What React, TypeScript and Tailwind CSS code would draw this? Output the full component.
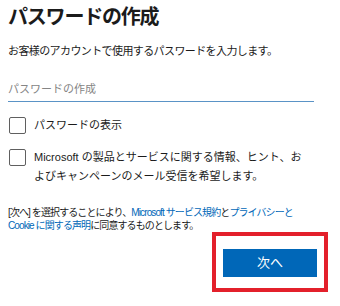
import { useState } from "react";

const jp = { fontFamily: '"Liberation Sans", "Noto Sans CJK JP", sans-serif' };

function Check({ checked, onToggle }: { checked: boolean; onToggle: () => void }) {
  return (
    <button
      type="button"
      onClick={onToggle}
      className="w-[17px] h-[17px] shrink-0 rounded-[2px] border border-[#5f5f5f] bg-white flex items-center justify-center"
    >
      {checked && (
        <svg width="11" height="11" viewBox="0 0 12 12" fill="none">
          <path d="M2 6.5l2.5 2.5L10 3" stroke="#1b1b1b" strokeWidth="1.4" />
        </svg>
      )}
    </button>
  );
}

export default function App() {
  const [show, setShow] = useState(false);
  const [mail, setMail] = useState(false);
  const [password, setPassword] = useState("");

  return (
    <div className="w-[340px] h-[306px] bg-white px-2 pt-[3px] text-[#1b1b1b] overflow-hidden" style={jp}>
      <h1 className="text-[20px] leading-[28px] font-bold tracking-[-1.2px]">パスワードの作成</h1>

      <p className="mt-[12px] text-[11px] leading-[16px] tracking-[-0.6px]">
        お客様のアカウントで使用するパスワードを入力します。
      </p>

      <input
        type={show ? "text" : "password"}
        value={password}
        onChange={(e) => setPassword(e.target.value)}
        placeholder="パスワードの作成"
        className="mt-[17px] block w-[306px] h-[26px] border-b border-[#5a93c6] text-[11px] outline-none placeholder:text-[#858585]"
      />

      <div className="mt-[15px] ml-[1px] flex items-center gap-2 h-[17px]">
        <Check checked={show} onToggle={() => setShow(!show)} />
        <span className="text-[11px] leading-[17px]">パスワードの表示</span>
      </div>

      <div className="mt-[15px] ml-[1px] flex items-start gap-2">
        <Check checked={mail} onToggle={() => setMail(!mail)} />
        <span className="text-[11px] leading-[19px] -mt-[1px]">
          Microsoft の製品とサービスに関する情報、ヒント、お
          <br />
          よびキャンペーンのメール受信を希望します。
        </span>
      </div>

      <p className="mt-[20px] text-[10px] leading-[13px] tracking-[-0.9px]">
        [次へ] を選択することにより、
        <a className="text-[#0067b8]">Microsoft サービス規約</a>と
        <a className="text-[#0067b8]">
          プライバシーと
          <br />
          Cookie に関する声明
        </a>
        に同意するものとします。
      </p>

      <div className="flex justify-end pr-[4px]">
        <div className="border-4 border-[#e3202b] px-[7px] pt-[13px] pb-[11px]">
          <button className="w-[94px] h-[28px] bg-[#0067b8] text-white text-[13px]">次へ</button>
        </div>
      </div>
    </div>
  );
}
